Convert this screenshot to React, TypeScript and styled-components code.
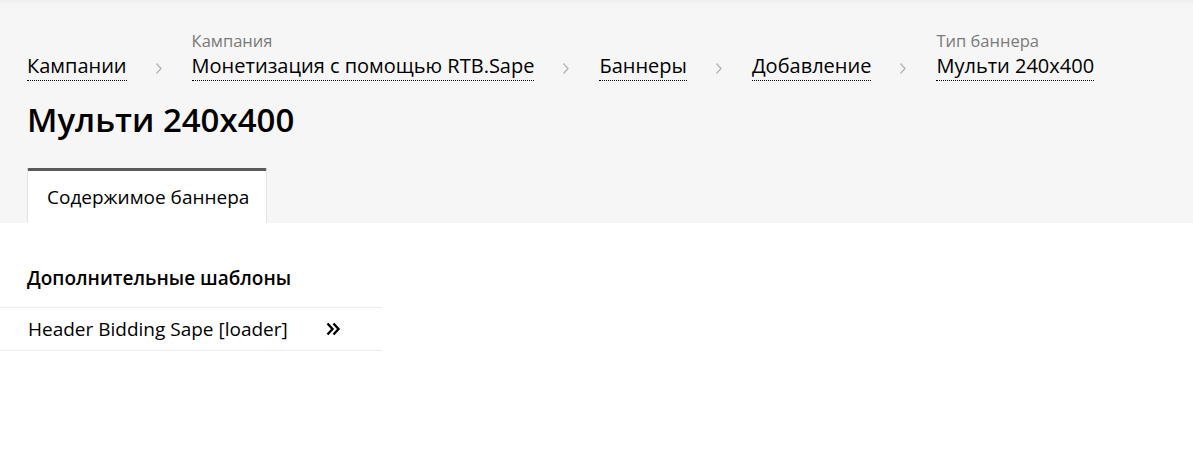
import React from "react";
import styled, { createGlobalStyle } from "styled-components";

const GlobalStyle = createGlobalStyle`
  body {
    margin: 0;
    background: #fff;
    color: #000;
    font-family: "Open Sans", "Noto Sans", Arial, sans-serif;
  }
`;

const Header = styled.header`
  background: #f6f6f6;
  box-shadow: inset 0 7px 6px -6px rgba(0, 0, 0, 0.06);
  padding: 31px 27px 0;
`;

const Crumbs = styled.nav`
  display: flex;
  align-items: flex-end;
`;

const Crumb = styled.div`
  display: flex;
  flex-direction: column;
`;

const CrumbLabel = styled.span`
  font-size: 16.5px;
  line-height: 20px;
  color: #7a7a7a;
  margin-bottom: 2px;
`;

const CrumbLink = styled.a`
  font-size: 20px;
  line-height: 26px;
  color: #000;
  text-decoration: none;
  border-bottom: 1px dotted #000;
  padding-bottom: 1px;
  cursor: pointer;
`;

const Separator = styled.span`
  display: flex;
  align-items: center;
  width: 8px;
  height: 26px;
  margin: 0 29px 0 28px;
  color: #b3b3b3;
`;

const Title = styled.h1`
  margin: 18px 0 0;
  font-size: 33px;
  line-height: 42px;
  font-weight: 600;
`;

const Tabs = styled.div`
  display: flex;
  margin-top: 27px;
`;

const Tab = styled.div<{ $active?: boolean }>`
  height: 52px;
  display: flex;
  align-items: center;
  padding: 0 17px 0 19px;
  font-size: 19px;
  background: ${(p) => (p.$active ? "#fff" : "transparent")};
  border-top: 3px solid ${(p) => (p.$active ? "#5a5a5a" : "transparent")};
  border-left: 1px solid #e3e3e3;
  border-right: 1px solid #e3e3e3;
  border-radius: 2px 2px 0 0;
`;

const Content = styled.main`
  padding-top: 43px;
`;

const SectionTitle = styled.h2`
  margin: 0 0 17px 27px;
  font-size: 19px;
  line-height: 24px;
  font-weight: 600;
`;

const List = styled.ul`
  list-style: none;
  margin: 0;
  padding: 0;
  width: 382px;
  border-top: 1px solid #ececec;
`;

const Row = styled.li`
  display: flex;
  align-items: center;
  justify-content: space-between;
  height: 42px;
  padding: 0 41px 0 28px;
  font-size: 19px;
  border-bottom: 1px solid #ececec;
`;

const Chevron = () => (
  <svg width="8" height="13" viewBox="0 0 8 13" fill="none">
    <path d="M1.5 1.5L6 6.5L1.5 11.5" stroke="currentColor" strokeWidth="1.3" />
  </svg>
);

const DoubleChevron = () => (
  <svg width="15" height="14" viewBox="0 0 15 14" fill="none">
    <path
      d="M1.5 1.5L6.5 7L1.5 12.5M7.5 1.5L12.5 7L7.5 12.5"
      stroke="#000"
      strokeWidth="2.4"
    />
  </svg>
);

const crumbs = [
  { text: "Кампании" },
  { label: "Кампания", text: "Монетизация с помощью RTB.Sape" },
  { text: "Баннеры" },
  { text: "Добавление" },
  { label: "Тип баннера", text: "Мульти 240х400" },
];

export default function App() {
  return (
    <>
      <GlobalStyle />
      <Header>
        <Crumbs>
          {crumbs.map((c, i) => (
            <React.Fragment key={c.text}>
              {i > 0 && (
                <Separator>
                  <Chevron />
                </Separator>
              )}
              <Crumb>
                {c.label && <CrumbLabel>{c.label}</CrumbLabel>}
                <CrumbLink>{c.text}</CrumbLink>
              </Crumb>
            </React.Fragment>
          ))}
        </Crumbs>
        <Title>Мульти 240х400</Title>
        <Tabs>
          <Tab $active>Содержимое баннера</Tab>
        </Tabs>
      </Header>
      <Content>
        <SectionTitle>Дополнительные шаблоны</SectionTitle>
        <List>
          <Row>
            Header Bidding Sape [loader]
            <DoubleChevron />
          </Row>
        </List>
      </Content>
    </>
  );
}
